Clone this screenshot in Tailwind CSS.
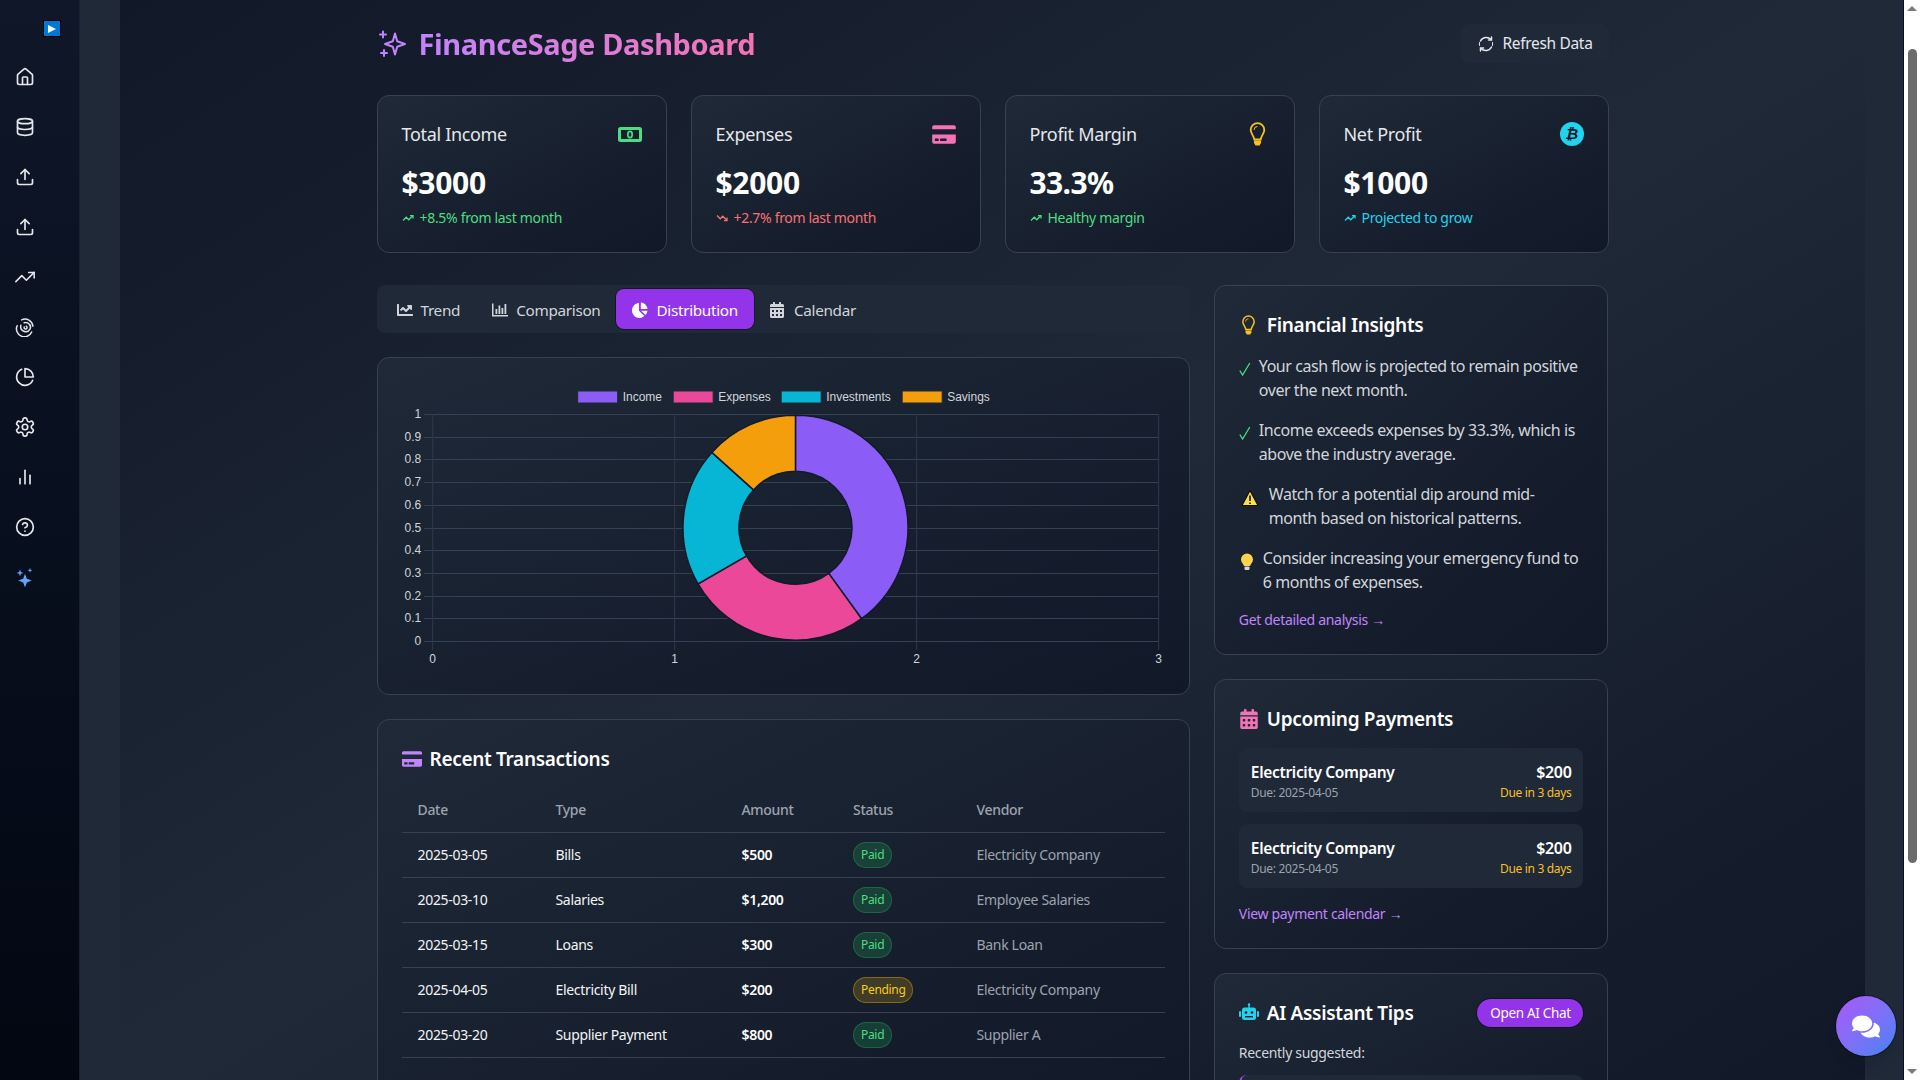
<!DOCTYPE html>
<html lang="en">
<head>
  <meta charset="UTF-8" />
  <meta name="viewport" content="width=device-width, initial-scale=1.0" />
  <title>FinanceSage Dashboard</title>
  <script src="https://cdn.jsdelivr.net/npm/@tailwindcss/browser@4"></script>
</head>
<body class="h-screen overflow-hidden flex bg-[#1f2937] text-white font-['Noto_Sans',sans-serif] tracking-[-0.02em]">

  <!-- sidebar -->
  <aside class="w-20 shrink-0 h-full bg-linear-to-b from-[#0f1729] to-[#030712] border-r border-[#1a2230] relative">
    <div class="absolute left-[43px] top-[20px] w-[18px] h-[17px] bg-[#0078d7] border border-black flex items-center justify-center">
      <svg width="10" height="10" viewBox="0 0 10 10"><path d="M1 1l8 4-8 4z" fill="#fff"/></svg>
    </div>
    <nav class="w-[50px] pt-[65px] flex flex-col items-center gap-[26px] text-[#e5e7eb]">
      <svg class="w-6 h-6 p-[2px]" viewBox="0 0 24 24" fill="none" stroke="currentColor" stroke-width="2" stroke-linecap="round" stroke-linejoin="round"><path d="M15 21v-8a1 1 0 0 0-1-1h-4a1 1 0 0 0-1 1v8"/><path d="M3 10a2 2 0 0 1 .709-1.528l7-5.999a2 2 0 0 1 2.582 0l7 5.999A2 2 0 0 1 21 10v9a2 2 0 0 1-2 2H5a2 2 0 0 1-2-2z"/></svg>
      <svg class="w-6 h-6 p-[2px]" viewBox="0 0 24 24" fill="none" stroke="currentColor" stroke-width="2" stroke-linecap="round" stroke-linejoin="round"><ellipse cx="12" cy="5" rx="9" ry="3"/><path d="M3 5V19A9 3 0 0 0 21 19V5"/><path d="M3 12A9 3 0 0 0 21 12"/></svg>
      <svg class="w-6 h-6 p-[2px]" viewBox="0 0 24 24" fill="none" stroke="currentColor" stroke-width="2" stroke-linecap="round" stroke-linejoin="round"><path d="M21 15v4a2 2 0 0 1-2 2H5a2 2 0 0 1-2-2v-4"/><polyline points="17 8 12 3 7 8"/><line x1="12" y1="3" x2="12" y2="15"/></svg>
      <svg class="w-6 h-6 p-[2px]" viewBox="0 0 24 24" fill="none" stroke="currentColor" stroke-width="2" stroke-linecap="round" stroke-linejoin="round"><path d="M21 15v4a2 2 0 0 1-2 2H5a2 2 0 0 1-2-2v-4"/><polyline points="17 8 12 3 7 8"/><line x1="12" y1="3" x2="12" y2="15"/></svg>
      <svg class="w-6 h-6 p-[1px]" viewBox="0 0 24 24" fill="none" stroke="currentColor" stroke-width="1.700" stroke-linecap="round" stroke-linejoin="round"><polyline points="22 7 13.500 15.500 8.500 10.500 2 17"/><polyline points="16 7 22 7 22 13"/></svg>
      <svg class="w-6 h-6 p-[2px]" viewBox="0 0 24 24" fill="none" stroke="currentColor" stroke-width="1.800" stroke-linecap="round"><path d="M8 3.500A9.500 9.500 0 0 1 21.500 11"/><path d="M2.500 10.500A9.500 9.500 0 0 0 20 18"/><path d="M7 10a6 6 0 0 0 11 4.500c1-2 .6-4.500-1-6A6 6 0 0 0 11 7"/><path d="M11 12a1.800 1.800 0 1 0 2.500-1"/></svg>
      <svg class="w-6 h-6 p-[2px]" viewBox="0 0 24 24" fill="none" stroke="currentColor" stroke-width="2" stroke-linecap="round" stroke-linejoin="round"><path d="M21.210 15.890A10 10 0 1 1 8 2.830"/><path d="M22 12A10 10 0 0 0 12 2v10z"/></svg>
      <svg class="w-6 h-6 p-[1px]" viewBox="0 0 24 24" fill="none" stroke="currentColor" stroke-width="1.800" stroke-linecap="round" stroke-linejoin="round"><path d="M12.220 2h-.44a2 2 0 0 0-2 2v.18a2 2 0 0 1-1 1.730l-.43.25a2 2 0 0 1-2 0l-.15-.08a2 2 0 0 0-2.730.73l-.22.38a2 2 0 0 0 .73 2.730l.15.1a2 2 0 0 1 1 1.720v.51a2 2 0 0 1-1 1.740l-.15.09a2 2 0 0 0-.73 2.730l.22.38a2 2 0 0 0 2.730.73l.15-.08a2 2 0 0 1 2 0l.43.25a2 2 0 0 1 1 1.730V20a2 2 0 0 0 2 2h.44a2 2 0 0 0 2-2v-.18a2 2 0 0 1 1-1.730l.43-.25a2 2 0 0 1 2 0l.15.08a2 2 0 0 0 2.730-.73l.22-.39a2 2 0 0 0-.73-2.730l-.15-.08a2 2 0 0 1-1-1.740v-.5a2 2 0 0 1 1-1.740l.15-.09a2 2 0 0 0 .73-2.730l-.22-.38a2 2 0 0 0-2.730-.73l-.15.08a2 2 0 0 1-2 0l-.43-.25a2 2 0 0 1-1-1.730V4a2 2 0 0 0-2-2z"/><circle cx="12" cy="12" r="3"/></svg>
      <svg class="w-6 h-6 p-[2px]" viewBox="0 0 24 24" fill="none" stroke="currentColor" stroke-width="2" stroke-linecap="round"><line x1="18" y1="20" x2="18" y2="10"/><line x1="12" y1="20" x2="12" y2="4"/><line x1="6" y1="20" x2="6" y2="14"/></svg>
      <svg class="w-6 h-6 p-[2px]" viewBox="0 0 24 24" fill="none" stroke="currentColor" stroke-width="2" stroke-linecap="round" stroke-linejoin="round"><circle cx="12" cy="12" r="10"/><path d="M9.090 9a3 3 0 0 1 5.830 1c0 2-3 3-3 3"/><path d="M12 17h.01"/></svg>
      <svg class="w-6 h-6 p-[2px]" viewBox="0 0 24 24" fill="#60a5fa"><path d="M12 8l2.200 6 6 2.300-6 2.200L12 24.500l-2.200-6-6-2.200 6-2.300z"/><path d="M6 3l1.100 3 3 1.100-3 1.100L6 11.200l-1.100-3-3-1.100 3-1.100z"/><path d="M18 1l.8 2.200 2.200.8-2.200.8L18 7l-.8-2.200-2.200-.8 2.200-.8z"/></svg>
    </nav>
  </aside>
  <div class="w-10 shrink-0"></div>

  <!-- main -->
  <main class="w-[1745px] shrink-0 h-full overflow-hidden bg-linear-to-br from-[#111827] via-[#1f2937] to-[#111827]">
    <div class="max-w-7xl mx-auto px-6 pt-6">

      <header class="flex items-center justify-between mb-8">
        <div class="flex items-center">
          <svg class="w-7 h-7 ml-[2px] mr-[12px]" viewBox="0 0 28 28" fill="none" stroke="#c084fc" stroke-width="2" stroke-linejoin="round"><path d="M15 3.500l2.200 7.800 7.800 2.700-7.800 2.700L15 24.500l-2.200-7.800L5 14l7.800-2.700z" transform="translate(1 0)"/><path d="M4 1.500v6M1 4.500h6M5 20v6M2 23h6" stroke-linecap="round"/></svg>
          <h1 class="text-[29px] leading-9 tracking-[-0.4px] font-bold bg-linear-to-r from-[#c084fc] to-[#f472b6] bg-clip-text text-transparent">FinanceSage Dashboard</h1>
        </div>
        <button class="h-[39px] w-[148px] pl-[2px] flex items-center justify-center rounded-lg bg-[#1f2937] text-[#e5e7eb] text-[15.500px]">
          <svg class="w-4 h-4 mr-2" viewBox="0 0 16 16" fill="none" stroke="currentColor" stroke-width="1.500" stroke-linecap="round"><path d="M2.500 5A6.500 6.500 0 0 1 13 3.500"/><path d="M13.500 11A6.500 6.500 0 0 1 3 12.500"/><path d="M1.500 9.500a6.500 6.500 0 0 1 0-3M14.500 6.500a6.500 6.500 0 0 1 0 3" stroke-width="1"/><path d="M13.500 1v3h-3M2.500 15v-3h3"/></svg>
          Refresh Data
        </button>
      </header>

      <!-- stat cards -->
      <section class="grid grid-cols-4 gap-6 mb-8">
        <div class="rounded-xl border border-[#374151] bg-linear-to-br from-[#1f2937] to-[#111827] p-6">
          <div class="flex items-center justify-between mb-[17px] h-7">
            <span class="text-lg text-[#e5e7eb]">Total Income</span>
            <svg class="w-6 h-[15px]" viewBox="0 0 24 15"><rect x="1.500" y="1.500" width="21" height="12" rx="1" fill="none" stroke="#4ade80" stroke-width="3"/><ellipse cx="12" cy="7.500" rx="2.200" ry="3.200" fill="none" stroke="#4ade80" stroke-width="1.700"/></svg>
          </div>
          <div class="text-3xl font-bold tracking-[-0.3px]">$3000</div>
          <div class="mt-[7px] text-sm text-[#4ade80] flex items-center"><svg class="w-3 h-3 mr-[6px]" viewBox="0 0 24 24" fill="none" stroke="currentColor" stroke-width="2.500"><polyline points="22 7 13.500 15.500 8.500 10.500 2 17"/><polyline points="16 7 22 7 22 13"/></svg>+8.5% from last month</div>
        </div>
        <div class="rounded-xl border border-[#374151] bg-linear-to-br from-[#1f2937] to-[#111827] p-6">
          <div class="flex items-center justify-between mb-[17px] h-7">
            <span class="text-lg text-[#e5e7eb]">Expenses</span>
            <svg class="w-6 h-[21px]" viewBox="0 0 576 512" fill="#f472b6"><path d="M0 432c0 26.500 21.500 48 48 48h480c26.500 0 48-21.500 48-48V256H0v176zm192-68c0-6.600 5.400-12 12-12h136c6.600 0 12 5.400 12 12v40c0 6.600-5.400 12-12 12H204c-6.600 0-12-5.400-12-12v-40zm-128 0c0-6.600 5.400-12 12-12h72c6.600 0 12 5.400 12 12v40c0 6.600-5.400 12-12 12H76c-6.600 0-12-5.400-12-12v-40zM576 80v48H0V80c0-26.500 21.500-48 48-48h480c26.500 0 48 21.500 48 48z"/></svg>
          </div>
          <div class="text-3xl font-bold tracking-[-0.3px]">$2000</div>
          <div class="mt-[7px] text-sm text-[#f87171] flex items-center"><svg class="w-3 h-3 mr-[6px]" viewBox="0 0 24 24" fill="none" stroke="currentColor" stroke-width="2.500"><polyline points="22 17 13.500 8.500 8.500 13.500 2 7"/><polyline points="16 17 22 17 22 11"/></svg>+2.7% from last month</div>
        </div>
        <div class="rounded-xl border border-[#374151] bg-linear-to-br from-[#1f2937] to-[#111827] p-6">
          <div class="flex items-center justify-between mb-[17px] h-7">
            <span class="text-lg text-[#e5e7eb]">Profit Margin</span>
            <svg class="w-[17px] h-6 mr-[4px]" viewBox="0 0 16 24"><path d="M8 1.200a6.800 6.800 0 0 0-6.800 6.800c0 3.700 3 5.200 3.600 9.500h6.400c.6-4.300 3.600-5.800 3.600-9.500A6.800 6.800 0 0 0 8 1.200z" fill="none" stroke="#fbbf24" stroke-width="1.800"/><path d="M4.500 8A3.500 3.500 0 0 1 8 4.500" fill="none" stroke="#fbbf24" stroke-width="1"/><path d="M4.500 18.500h7v2.500l-1.500 2.500H6L4.500 21z" fill="#fbbf24"/></svg>
          </div>
          <div class="text-3xl font-bold tracking-[-0.6px]">33.3%</div>
          <div class="mt-[7px] text-sm text-[#4ade80] flex items-center"><svg class="w-3 h-3 mr-[6px]" viewBox="0 0 24 24" fill="none" stroke="currentColor" stroke-width="2.500"><polyline points="22 7 13.500 15.500 8.500 10.500 2 17"/><polyline points="16 7 22 7 22 13"/></svg>Healthy margin</div>
        </div>
        <div class="rounded-xl border border-[#374151] bg-linear-to-br from-[#1f2937] to-[#111827] p-6">
          <div class="flex items-center justify-between mb-[17px] h-7">
            <span class="text-lg text-[#e5e7eb]">Net Profit</span>
            <span class="w-6 h-6 rounded-full bg-[#22d3ee] flex items-center justify-center text-[#111827] text-[15px] font-bold italic font-['DejaVu_Sans',sans-serif]">₿</span>
          </div>
          <div class="text-3xl font-bold tracking-[-0.3px]">$1000</div>
          <div class="mt-[7px] text-sm text-[#22d3ee] flex items-center"><svg class="w-3 h-3 mr-[6px]" viewBox="0 0 24 24" fill="none" stroke="currentColor" stroke-width="2.500"><polyline points="22 7 13.500 15.500 8.500 10.500 2 17"/><polyline points="16 7 22 7 22 13"/></svg>Projected to grow</div>
        </div>
      </section>

      <div class="grid grid-cols-3 gap-6">
        <!-- left column -->
        <div class="col-span-2 flex flex-col gap-6">
          <div class="h-12 rounded-lg bg-[#1f2937] p-1 flex text-[15.300px] text-[#d1d5db]">
            <button class="h-10 px-4 pt-[2px] flex items-center rounded-lg">
              <svg class="w-4 h-4 mr-2" viewBox="0 0 512 512" fill="currentColor"><path d="M496 384H64V80c0-8.840-7.160-16-16-16H16C7.160 64 0 71.160 0 80v336c0 17.670 14.330 32 32 32h464c8.840 0 16-7.160 16-16v-32c0-8.840-7.160-16-16-16zM464 96H345.940c-21.380 0-32.090 25.850-16.970 40.970l32.400 32.400L288 242.750l-73.370-73.370c-12.500-12.500-32.760-12.500-45.250 0l-68.690 68.690c-6.250 6.250-6.250 16.380 0 22.630l22.620 22.620c6.250 6.250 16.380 6.250 22.630 0L192 237.250l73.370 73.370c12.500 12.500 32.760 12.500 45.250 0l96-96 32.400 32.400c15.120 15.120 40.970 4.410 40.970-16.970V112c0-8.840-7.160-16-16-16z"/></svg>
              Trend
            </button>
            <button class="h-10 px-4 pt-[2px] flex items-center rounded-lg">
              <svg class="w-4 h-4 mr-2" viewBox="0 0 16 16" fill="currentColor"><path d="M0 1.500h1.500V13H16v1.500H0z"/><rect x="3.500" y="7" width="1.800" height="5"/><rect x="6.500" y="3.500" width="1.800" height="8.500"/><rect x="9.500" y="6" width="1.800" height="6"/><rect x="12.500" y="2" width="1.800" height="10"/></svg>
              Comparison
            </button>
            <button class="h-10 px-4 pt-[2px] flex items-center rounded-lg bg-[#9333ea] text-white ring-1 ring-black/40">
              <svg class="w-4 h-4 mr-2" viewBox="0 0 16 16" fill="currentColor"><path d="M7 1.100V8.700l5.300 5.300A7.400 7.400 0 1 1 7 1.100z"/><path d="M8.800.6A7 7 0 0 1 15.400 7H8.800z"/><path d="M9.200 8.800h6.300a7.300 7.300 0 0 1-2.100 4.300z"/></svg>
              Distribution
            </button>
            <button class="h-10 px-4 pt-[2px] flex items-center rounded-lg">
              <svg class="w-[14px] h-4 mr-[10px]" viewBox="0 0 448 512" fill="currentColor"><path d="M0 464c0 26.500 21.500 48 48 48h352c26.500 0 48-21.500 48-48V192H0v272zm320-196c0-6.600 5.400-12 12-12h40c6.600 0 12 5.400 12 12v40c0 6.600-5.400 12-12 12h-40c-6.600 0-12-5.400-12-12v-40zm0 128c0-6.600 5.400-12 12-12h40c6.600 0 12 5.400 12 12v40c0 6.600-5.400 12-12 12h-40c-6.600 0-12-5.400-12-12v-40zM192 268c0-6.600 5.400-12 12-12h40c6.600 0 12 5.400 12 12v40c0 6.600-5.400 12-12 12h-40c-6.600 0-12-5.400-12-12v-40zm0 128c0-6.600 5.400-12 12-12h40c6.600 0 12 5.400 12 12v40c0 6.600-5.400 12-12 12h-40c-6.600 0-12-5.400-12-12v-40zM64 268c0-6.600 5.400-12 12-12h40c6.600 0 12 5.400 12 12v40c0 6.600-5.400 12-12 12H76c-6.600 0-12-5.400-12-12v-40zm0 128c0-6.600 5.400-12 12-12h40c6.600 0 12 5.400 12 12v40c0 6.600-5.400 12-12 12H76c-6.600 0-12-5.400-12-12v-40zM400 64h-48V16c0-8.800-7.200-16-16-16h-32c-8.800 0-16 7.200-16 16v48H160V16c0-8.800-7.200-16-16-16h-32c-8.800 0-16 7.200-16 16v48H48C21.500 64 0 85.500 0 112v48h448v-48c0-26.500-21.500-48-48-48z"/></svg>
              Calendar
            </button>
          </div>

          <!-- chart -->
          <div class="rounded-xl border border-[#374151] bg-linear-to-br from-[#1f2937] to-[#111827] p-6">
            <svg id="chart" class="block w-full h-[288px] tracking-normal" viewBox="0 0 763 288"></svg>
          </div>

          <!-- transactions -->
          <div class="rounded-xl border border-[#374151] bg-linear-to-br from-[#1f2937] to-[#111827] p-6">
            <div class="flex items-center mb-4 h-7 pt-[2px]">
              <svg class="w-5 h-[18px] mr-2 shrink-0" viewBox="0 0 576 512" fill="#c084fc"><path d="M0 432c0 26.500 21.500 48 48 48h480c26.500 0 48-21.500 48-48V256H0v176zm192-68c0-6.600 5.400-12 12-12h136c6.600 0 12 5.400 12 12v40c0 6.600-5.400 12-12 12H204c-6.600 0-12-5.400-12-12v-40zm-128 0c0-6.600 5.400-12 12-12h72c6.600 0 12 5.400 12 12v40c0 6.600-5.400 12-12 12H76c-6.600 0-12-5.400-12-12v-40zM576 80v48H0V80c0-26.500 21.500-48 48-48h480c26.500 0 48 21.500 48 48z"/></svg>
              <h2 class="text-[19px] font-semibold">Recent Transactions</h2>
            </div>
            <table class="w-full table-fixed text-sm">
              <thead class="text-[#9ca3af]">
                <tr class="border-b border-[#374151] h-[44px]">
                  <th class="w-[138px] px-4 text-left font-medium">Date</th>
                  <th class="w-[186px] px-4 text-left font-medium">Type</th>
                  <th class="w-[111.500px] px-4 text-left font-medium">Amount</th>
                  <th class="w-[123.500px] px-4 text-left font-medium">Status</th>
                  <th class="px-4 text-left font-medium">Vendor</th>
                </tr>
              </thead>
              <tbody>
                <tr class="border-b border-[#374151] h-[45px]">
                  <td class="px-4 text-[#f3f4f6]">2025-03-05</td>
                  <td class="px-4 text-[#f3f4f6]">Bills</td>
                  <td class="px-4 font-semibold">$500</td>
                  <td class="px-4"><span class="inline-flex h-[26px] items-center rounded-full border border-[#22c55e]/30 bg-[#22c55e]/20 px-[7px] text-xs text-[#4ade80]">Paid</span></td>
                  <td class="px-4 text-[#9ca3af]">Electricity Company</td>
                </tr>
                <tr class="border-b border-[#374151] h-[45px]">
                  <td class="px-4 text-[#f3f4f6]">2025-03-10</td>
                  <td class="px-4 text-[#f3f4f6]">Salaries</td>
                  <td class="px-4 font-semibold">$1,200</td>
                  <td class="px-4"><span class="inline-flex h-[26px] items-center rounded-full border border-[#22c55e]/30 bg-[#22c55e]/20 px-[7px] text-xs text-[#4ade80]">Paid</span></td>
                  <td class="px-4 text-[#9ca3af]">Employee Salaries</td>
                </tr>
                <tr class="border-b border-[#374151] h-[45px]">
                  <td class="px-4 text-[#f3f4f6]">2025-03-15</td>
                  <td class="px-4 text-[#f3f4f6]">Loans</td>
                  <td class="px-4 font-semibold">$300</td>
                  <td class="px-4"><span class="inline-flex h-[26px] items-center rounded-full border border-[#22c55e]/30 bg-[#22c55e]/20 px-[7px] text-xs text-[#4ade80]">Paid</span></td>
                  <td class="px-4 text-[#9ca3af]">Bank Loan</td>
                </tr>
                <tr class="border-b border-[#374151] h-[45px]">
                  <td class="px-4 text-[#f3f4f6]">2025-04-05</td>
                  <td class="px-4 text-[#f3f4f6]">Electricity Bill</td>
                  <td class="px-4 font-semibold">$200</td>
                  <td class="px-4"><span class="inline-flex h-[26px] items-center rounded-full border border-[#eab308]/40 bg-[#eab308]/20 px-[7px] text-xs text-[#facc15]">Pending</span></td>
                  <td class="px-4 text-[#9ca3af]">Electricity Company</td>
                </tr>
                <tr class="border-b border-[#374151] h-[45px]">
                  <td class="px-4 text-[#f3f4f6]">2025-03-20</td>
                  <td class="px-4 text-[#f3f4f6]">Supplier Payment</td>
                  <td class="px-4 font-semibold">$800</td>
                  <td class="px-4"><span class="inline-flex h-[26px] items-center rounded-full border border-[#22c55e]/30 bg-[#22c55e]/20 px-[7px] text-xs text-[#4ade80]">Paid</span></td>
                  <td class="px-4 text-[#9ca3af]">Supplier A</td>
                </tr>
              </tbody>
            </table>
            <a class="block mt-[18px] text-sm text-[#c084fc]">View all transactions <span class="font-['Liberation_Sans']">→</span></a>
          </div>
        </div>

        <!-- right column -->
        <div class="flex flex-col gap-6">
          <div class="rounded-xl border border-[#374151] bg-linear-to-br from-[#1f2937] to-[#111827] p-6">
            <div class="flex items-center mb-4 h-7 pt-[2px]">
              <span class="w-5 mr-2 flex justify-center"><svg class="w-[15px] h-5" viewBox="0 0 16 24"><path d="M8 1.200a6.800 6.800 0 0 0-6.800 6.800c0 3.700 3 5.200 3.600 9.500h6.400c.6-4.300 3.600-5.800 3.600-9.500A6.800 6.800 0 0 0 8 1.200z" fill="none" stroke="#fbbf24" stroke-width="1.800"/><path d="M4.500 8A3.500 3.500 0 0 1 8 4.500" fill="none" stroke="#fbbf24" stroke-width="1"/><path d="M4.500 18.500h7v2.500l-1.500 2.500H6L4.500 21z" fill="#fbbf24"/></svg></span>
              <h2 class="text-[19px] font-semibold">Financial Insights</h2>
            </div>
            <ul class="flex flex-col gap-4 text-base tracking-[-0.45px] leading-6 text-[#d1d5db]">
              <li class="flex">
                <svg class="w-3 h-[14px] mr-2 mt-[8px] shrink-0" viewBox="0 0 12 14" fill="none" stroke="#4ade80" stroke-width="1.300"><path d="M.8 8.500l2.800 4.500L10.800 1"/></svg>
                <span>Your cash flow is projected to remain positive over the next month.</span>
              </li>
              <li class="flex">
                <svg class="w-3 h-[14px] mr-2 mt-[8px] shrink-0" viewBox="0 0 12 14" fill="none" stroke="#4ade80" stroke-width="1.300"><path d="M.8 8.500l2.800 4.500L10.800 1"/></svg>
                <span>Income exceeds expenses by 33.3%, which is above the industry average.</span>
              </li>
              <li class="flex">
                <svg class="w-[22px] h-[18px] mr-2 mt-[7px] shrink-0" viewBox="0 0 22 18"><path d="M11 1.500l8 15H3z" fill="#fde047" stroke="#111" stroke-width="1.200" stroke-linejoin="round"/><path d="M11 6.500v5.500M11 13.500v1.500" stroke="#111" stroke-width="1.600"/></svg>
                <span>Watch for a potential dip around mid-<br>month based on historical patterns.</span>
              </li>
              <li class="flex">
                <svg class="w-4 h-[18px] mr-2 mt-[7px] shrink-0" viewBox="0 0 16 18"><path d="M8 .5a6 6 0 0 0-6 6c0 2.800 2 3.800 3 6.500h6c1-2.700 3-3.700 3-6.500a6 6 0 0 0-6-6z" fill="#fcd34d"/><rect x="5.500" y="13.500" width="5" height="3.500" rx="1" fill="#d1d5db"/></svg>
                <span>Consider increasing your emergency fund to<br>6 months of expenses.</span>
              </li>
            </ul>
            <a class="block mt-4 text-sm text-[#c084fc]">Get detailed analysis <span class="font-['Liberation_Sans']">→</span></a>
          </div>

          <div class="rounded-xl border border-[#374151] bg-linear-to-br from-[#1f2937] to-[#111827] p-6">
            <div class="flex items-center mb-4 h-7 pt-[2px]">
              <svg class="w-[18px] h-5 mr-[9px] ml-[1px]" viewBox="0 0 448 512" fill="#f472b6"><path d="M0 464c0 26.500 21.500 48 48 48h352c26.500 0 48-21.500 48-48V192H0v272zm320-196c0-6.600 5.400-12 12-12h40c6.600 0 12 5.400 12 12v40c0 6.600-5.400 12-12 12h-40c-6.600 0-12-5.400-12-12v-40zm0 128c0-6.600 5.400-12 12-12h40c6.600 0 12 5.400 12 12v40c0 6.600-5.400 12-12 12h-40c-6.600 0-12-5.400-12-12v-40zM192 268c0-6.600 5.400-12 12-12h40c6.600 0 12 5.400 12 12v40c0 6.600-5.400 12-12 12h-40c-6.600 0-12-5.400-12-12v-40zm0 128c0-6.600 5.400-12 12-12h40c6.600 0 12 5.400 12 12v40c0 6.600-5.400 12-12 12h-40c-6.600 0-12-5.400-12-12v-40zM64 268c0-6.600 5.400-12 12-12h40c6.600 0 12 5.400 12 12v40c0 6.600-5.400 12-12 12H76c-6.600 0-12-5.400-12-12v-40zm0 128c0-6.600 5.400-12 12-12h40c6.600 0 12 5.400 12 12v40c0 6.600-5.400 12-12 12H76c-6.600 0-12-5.400-12-12v-40zM400 64h-48V16c0-8.800-7.200-16-16-16h-32c-8.800 0-16 7.200-16 16v48H160V16c0-8.800-7.200-16-16-16h-32c-8.800 0-16 7.200-16 16v48H48C21.500 64 0 85.500 0 112v48h448v-48c0-26.500-21.500-48-48-48z"/></svg>
              <h2 class="text-[19px] font-semibold">Upcoming Payments</h2>
            </div>
            <div class="flex flex-col gap-3">
              <div class="h-16 rounded-lg bg-[#1f2937] px-3 pt-[4px] flex items-center justify-between">
                <div><div class="text-[15.500px] font-semibold leading-[22px]">Electricity Company</div><div class="text-xs text-[#9ca3af] leading-5">Due: 2025-04-05</div></div>
                <div class="text-right"><div class="text-base font-semibold leading-[22px]">$200</div><div class="text-xs text-[#fbbf24] leading-5">Due in 3 days</div></div>
              </div>
              <div class="h-16 rounded-lg bg-[#1f2937] px-3 pt-[4px] flex items-center justify-between">
                <div><div class="text-[15.500px] font-semibold leading-[22px]">Electricity Company</div><div class="text-xs text-[#9ca3af] leading-5">Due: 2025-04-05</div></div>
                <div class="text-right"><div class="text-base font-semibold leading-[22px]">$200</div><div class="text-xs text-[#fbbf24] leading-5">Due in 3 days</div></div>
              </div>
            </div>
            <a class="block mt-4 text-sm text-[#c084fc]">View payment calendar <span class="font-['Liberation_Sans']">→</span></a>
          </div>

          <div class="rounded-xl border border-[#374151] bg-linear-to-br from-[#1f2937] to-[#111827] p-6">
            <div class="flex items-center justify-between mb-3 h-7 pt-[2px]">
              <div class="flex items-center">
                <svg class="w-5 h-5 mr-2" viewBox="0 0 20 20" fill="#22d3ee"><rect x="3" y="4.500" width="14" height="12.500" rx="2.500"/><rect x="9.300" y="1" width="1.400" height="4"/><circle cx="10" cy="1.500" r="1.200"/><rect x="0" y="8" width="2" height="6" rx="1"/><rect x="18" y="8" width="2" height="6" rx="1"/><circle cx="7" cy="9.500" r="1.300" fill="#111827"/><circle cx="13" cy="9.500" r="1.300" fill="#111827"/><rect x="6" y="13" width="8" height="1.400" fill="#111827"/></svg>
                <h2 class="text-[19px] font-semibold">AI Assistant Tips</h2>
              </div>
              <button class="h-7 w-[106px] rounded-full bg-[#9333ea] text-[13.500px] text-white ring-1 ring-black/40">Open AI Chat</button>
            </div>
            <p class="text-sm text-[#d1d5db] leading-5 mb-3 pt-[5px]">Recently suggested:</p>
            <div class="h-16 rounded-lg bg-[#1f2937] border-l-2 border-[#a855f7]"></div>
          </div>
        </div>
      </div>
    </div>
  </main>

  <div class="flex-1 border-r border-[#0b0f2a]"></div>

  <!-- scrollbar -->
  <div class="w-[16px] shrink-0 h-full bg-white flex flex-col items-center pt-[6px]">
    <div class="w-0 h-0 border-x-[5px] border-x-transparent border-b-[5px] border-b-[#7a7a7a]"></div>
    <div class="mt-[38px] w-[9px] h-[814px] rounded-full bg-[#6b6b6b]"></div>
    <div class="mt-auto mb-[6px] w-0 h-0 border-x-[5px] border-x-transparent border-t-[5px] border-t-[#7a7a7a]"></div>
  </div>

  <!-- chat button -->
  <button class="fixed left-[1836px] top-[996px] w-[60px] h-[60px] rounded-full bg-linear-to-br from-[#a855f7] to-[#3b82f6] flex items-center justify-center shadow-lg ring-1 ring-black/40">
    <svg class="w-7 h-[25px]" viewBox="0 0 576 512" fill="#fff"><path d="M416 192c0-88.400-93.100-160-208-160S0 103.600 0 192c0 34.300 14.100 65.900 38 92-13.400 30.200-35.500 54.200-35.800 54.500-2.200 2.300-2.800 5.700-1.500 8.700S4.800 352 8 352c36.600 0 66.900-12.300 88.700-25 32.200 15.700 70.300 25 111.300 25 114.900 0 208-71.600 208-160zm122 220c23.900-26 38-57.700 38-92 0-66.900-53.500-124.200-129.300-148.100.9 6.600 1.300 13.300 1.300 20.100 0 105.900-107.700 192-240 192-10.800 0-21.300-.8-31.700-1.900C207.800 439.600 281.800 480 368 480c41 0 79.100-9.200 111.300-25 21.800 12.700 52.100 25 88.700 25 3.200 0 6.100-1.900 7.300-4.800 1.300-2.900.7-6.300-1.500-8.700-.3-.3-22.400-24.200-35.800-54.500z"/></svg>
  </button>

  <script>
    // donut over an empty cartesian grid, same as the chart lib draws it
    const svg = document.getElementById('chart');
    const left = 29.5, right = 756, top_ = 32, bottom = 259;
    let out = '';
    const label = 'font-family="Liberation Sans" font-size="12" fill="#d1d5db"';

    for (let i = 0; i <= 10; i++) {
      const y = Math.round(bottom - (bottom - top_) * i / 10) + 0.5;
      out += `<line x1="22" x2="${right}" y1="${y}" y2="${y}" stroke="#344154"/>`;
      const t = i === 10 ? '1' : i === 0 ? '0' : (i / 10).toFixed(1);
      out += `<text x="19" y="${y + 3}" text-anchor="end" ${label}>${t}</text>`;
    }
    for (let i = 0; i <= 3; i++) {
      const x = Math.round(left + (right - left) * i / 3) + 0.5;
      out += `<line x1="${x}" x2="${x}" y1="${top_}" y2="268" stroke="#2d3a4c"/>`;
      out += `<text x="${x}" y="281" text-anchor="middle" ${label}>${i}</text>`;
    }

    const legend = [['Income', '#8b5cf6', 175.5], ['Expenses', '#ec4899', 271], ['Investments', '#06b6d4', 379], ['Savings', '#f59e0b', 500]];
    legend.forEach(([name, color, x]) => {
      out += `<rect x="${x}" y="9" width="40" height="12" fill="${color}" stroke="#1f2937"/>`;
      out += `<text x="${x + 45}" y="19" ${label}>${name}</text>`;
    });

    const cx = 393.3, cy = 145.7, R = 112.5, r = 56.5;
    const data = [[3000, '#8b5cf6'], [2000, '#ec4899'], [1500, '#06b6d4'], [1000, '#f59e0b']];
    const total = data.reduce((s, d) => s + d[0], 0);
    let a = -Math.PI / 2;
    const pt = (rad, ang) => `${(cx + rad * Math.cos(ang)).toFixed(2)} ${(cy + rad * Math.sin(ang)).toFixed(2)}`;
    data.forEach(([v, color]) => {
      const b = a + v / total * Math.PI * 2;
      const large = b - a > Math.PI ? 1 : 0;
      out += `<path d="M${pt(R, a)}A${R} ${R} 0 ${large} 1 ${pt(R, b)}L${pt(r, b)}A${r} ${r} 0 ${large} 0 ${pt(r, a)}Z" fill="${color}" stroke="#121a2a" stroke-width="1.5"/>`;
      a = b;
    });
    svg.innerHTML = out;
  </script>
</body>
</html>
